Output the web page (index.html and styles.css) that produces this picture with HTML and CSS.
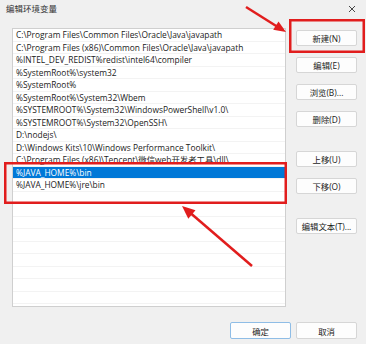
FILE: index.html
```html
<!DOCTYPE html>
<html lang="zh-CN">
  <head>
    <meta charset="UTF-8" />
    <meta name="viewport" content="width=device-width, initial-scale=1.0" />
    <title>编辑环境变量</title>
    <link rel="stylesheet" href="styles.css">
  </head>
  <body>
    <div class="dialog">
      <div class="titlebar">
        <span class="title">编辑环境变量</span>
        <svg class="close" width="8" height="8" viewBox="0 0 8 8">
          <path d="M1 1 L7 7 M7 1 L1 7" stroke="#333" stroke-width="0.9" fill="none" />
        </svg>
      </div>

      <div class="content">
        <ul class="path-list">
          <li>C:\Program Files\Common Files\Oracle\Java\javapath</li>
          <li>C:\Program Files (x86)\Common Files\Oracle\Java\javapath</li>
          <li>%INTEL_DEV_REDIST%redist\intel64\compiler</li>
          <li>%SystemRoot%\system32</li>
          <li>%SystemRoot%</li>
          <li>%SystemRoot%\System32\Wbem</li>
          <li>%SYSTEMROOT%\System32\WindowsPowerShell\v1.0\</li>
          <li>%SYSTEMROOT%\System32\OpenSSH\</li>
          <li>D:\nodejs\</li>
          <li>D:\Windows Kits\10\Windows Performance Toolkit\</li>
          <li>C:\Program Files (x86)\Tencent\微信web开发者工具\dll\</li>
          <li class="selected">%JAVA_HOME%\bin</li>
          <li>%JAVA_HOME%\jre\bin</li>
          <li></li><li></li><li></li><li></li><li></li>
          <li></li><li></li><li></li><li></li><li></li>
        </ul>

        <div class="side-buttons">
          <button>新建(N)</button>
          <button>编辑(E)</button>
          <button>浏览(B)...</button>
          <button>删除(D)</button>
          <button class="spaced">上移(U)</button>
          <button>下移(O)</button>
          <button class="spaced">编辑文本(T)...</button>
        </div>
      </div>

      <div class="footer">
        <button class="default">确定</button>
        <button>取消</button>
      </div>

      <!-- red annotations drawn over the dialog -->
      <svg class="annotations" width="366" height="344" viewBox="0 0 366 344">
        <g stroke="#e11d1d" fill="none" stroke-width="2.5">
          <rect x="290.25" y="20.25" width="73.5" height="31.5" />
          <rect x="5.25" y="163.25" width="280.5" height="39.5" />
          <line x1="246" y1="7" x2="277" y2="26.5" />
          <line x1="252" y1="266" x2="191" y2="213.5" />
        </g>
        <g fill="#e11d1d">
          <polygon points="286,32 273.2,29.8 278.5,21.4" />
          <polygon points="182,206 195.5,210.3 188.3,218.7" />
        </g>
      </svg>
    </div>
  </body>
</html>
```

FILE: styles.css
```css
/* General */
body {
  margin: 0;
  background: #f0f0f0;
  font-family: "Open Sans", "Noto Sans CJK SC", sans-serif;
  color: #1b1b1b;
}

.dialog {
  position: relative;
  width: 366px;
  height: 344px;
  overflow: hidden;
}

/* Title bar */
.titlebar {
  height: 28px;
  display: flex;
  justify-content: space-between;
  align-items: flex-start;
  padding: 3px 6px 0 6px;
  box-sizing: border-box;
}

.title {
  font-size: 8.5px;
  color: #333;
  line-height: 12px;
}

.close {
  margin-top: 2px;
  margin-right: 4px;
}

/* Content */
.content {
  display: flex;
  gap: 10px;
  padding-left: 12px;
}

.path-list {
  list-style: none;
  margin: 0;
  padding: 0;
  width: 274px;
  height: 279px;
  box-sizing: border-box;
  background: white;
  border: 1px solid #cfcfcf;
  overflow: hidden;
}

.path-list li {
  height: 12.5px;
  line-height: 12px;
  padding-left: 3px;
  font-size: 8.4px;
  white-space: nowrap;
  border-bottom: 1px solid #f3f3f3;
  box-sizing: border-box;
}

.path-list li.selected {
  background: #0078d7;
  color: white;
}

/* Buttons */
.side-buttons {
  display: flex;
  flex-direction: column;
  gap: 11px;
  padding-top: 2px;
}

button {
  width: 61px;
  height: 16px;
  padding: 0;
  background: #fdfdfd;
  border: 1px solid #d6d6d6;
  border-radius: 2px;
  font-family: "Open Sans", "Noto Sans CJK SC", sans-serif;
  font-size: 8.4px;
  color: #1b1b1b;
}

.side-buttons .spaced {
  margin-top: 13px;
}

.footer {
  display: flex;
  justify-content: flex-end;
  gap: 5px;
  padding: 15px 9px 0 0;
}

.footer button {
  width: 61px;
  height: 17px;
}

.footer .default {
  border-color: #8fbde6;
}

/* Annotations */
.annotations {
  position: absolute;
  left: 0;
  top: 0;
  pointer-events: none;
}
```
